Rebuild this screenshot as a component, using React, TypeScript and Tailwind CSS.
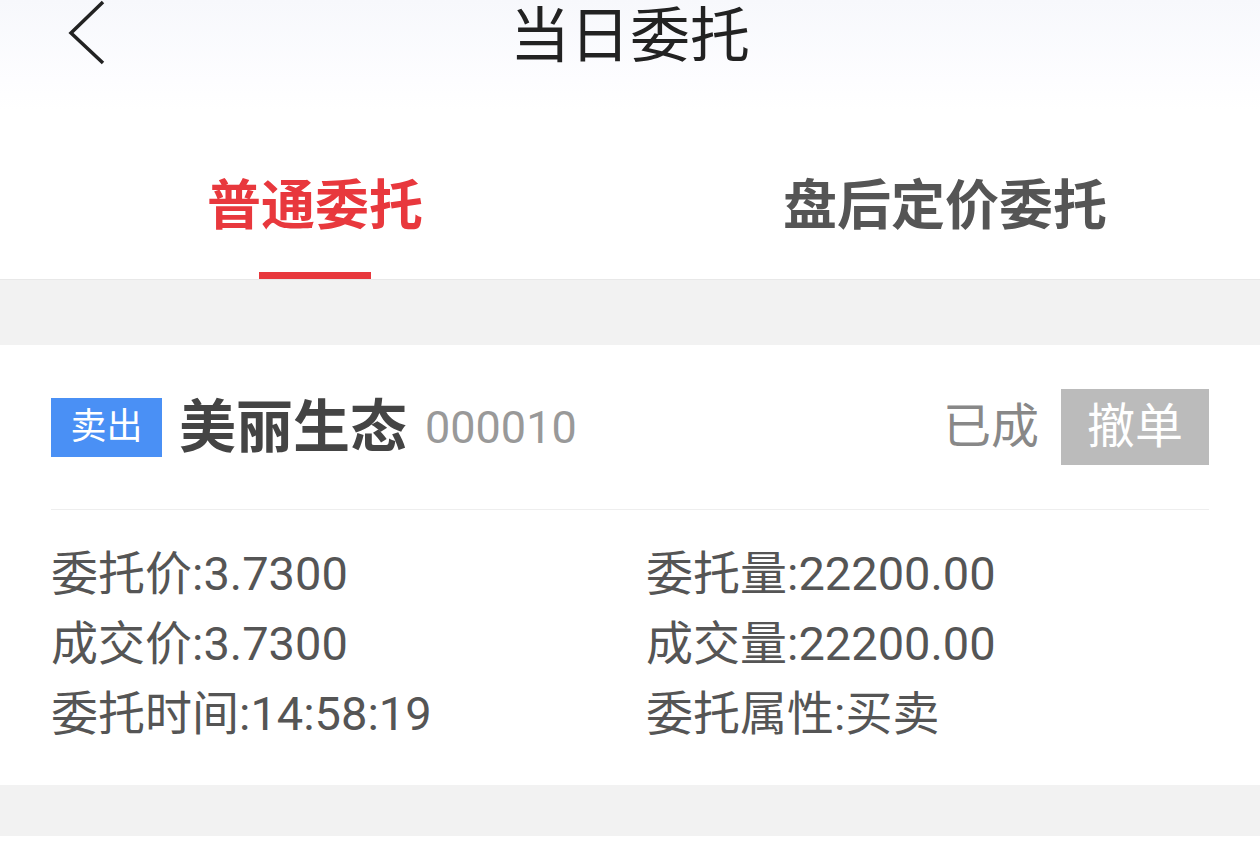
const font = { fontFamily: 'Roboto, "Noto Sans CJK SC", sans-serif' }

function Field({ label, value }: { label: string; value: string }) {
  return (
    <div className="h-[70px] flex items-center text-[47px] text-[#555555] leading-none">
      {label}:{value}
    </div>
  )
}

export default function App() {
  return (
    <div className="w-[1260px] h-[851px] bg-[#f2f2f2] overflow-hidden" style={font}>
      {/* Header */}
      <header className="h-[80px] bg-gradient-to-b from-[#f7f8fc] to-[#fdfdff] flex items-center relative">
        <button className="absolute left-[66px] top-0 text-[#222222]">
          <svg width="42" height="66" viewBox="0 0 42 66" fill="none" stroke="currentColor" strokeWidth={3.5}>
            <path d="M37 2 L5 33 L37 63" strokeLinejoin="miter" />
          </svg>
        </button>
        <h1 className="w-full text-center text-[60px] text-[#222222] leading-none -mt-[6px]">当日委托</h1>
      </header>

      {/* Tabs */}
      <div className="h-[200px] bg-gradient-to-b from-[#fdfdff] to-white to-[15%] border-b border-[#e8e8e8] flex">
        <div className="flex-1 flex flex-col items-center">
          <div className="h-[192px] pt-[100px] text-[54px] font-bold text-[#e8383d] leading-none">普通委托</div>
          <div className="w-[112px] h-[7px] bg-[#e8383d]" />
        </div>
        <div className="flex-1 flex flex-col items-center">
          <div className="pt-[100px] text-[54px] font-bold text-[#555555] leading-none">盘后定价委托</div>
        </div>
      </div>

      {/* Card */}
      <div className="mt-[65px] bg-white px-[51px]">
        <div className="h-[165px] flex items-center border-b border-[#eeeeee]">
          <span className="bg-[#4a90f5] text-white text-[36px] leading-none w-[111px] h-[59px] flex items-center justify-center">
            卖出
          </span>
          <span className="ml-[17px] text-[57px] font-bold text-[#444444] leading-none">美丽生态</span>
          <span className="ml-[18px] text-[45px] text-[#999999] leading-none">000010</span>
          <span className="ml-auto text-[48px] text-[#888888] leading-none">已成</span>
          <button className="ml-[22px] w-[148px] h-[76px] bg-[#bbbbbb] text-white text-[48px] leading-none">
            撤单
          </button>
        </div>
        <div className="grid grid-cols-[595px_1fr] pt-[28px] pb-[37px]">
          <Field label="委托价" value="3.7300" />
          <Field label="委托量" value="22200.00" />
          <Field label="成交价" value="3.7300" />
          <Field label="成交量" value="22200.00" />
          <Field label="委托时间" value="14:58:19" />
          <Field label="委托属性" value="买卖" />
        </div>
      </div>

      <div className="mt-[51px] h-[20px] bg-white" />
    </div>
  )
}
